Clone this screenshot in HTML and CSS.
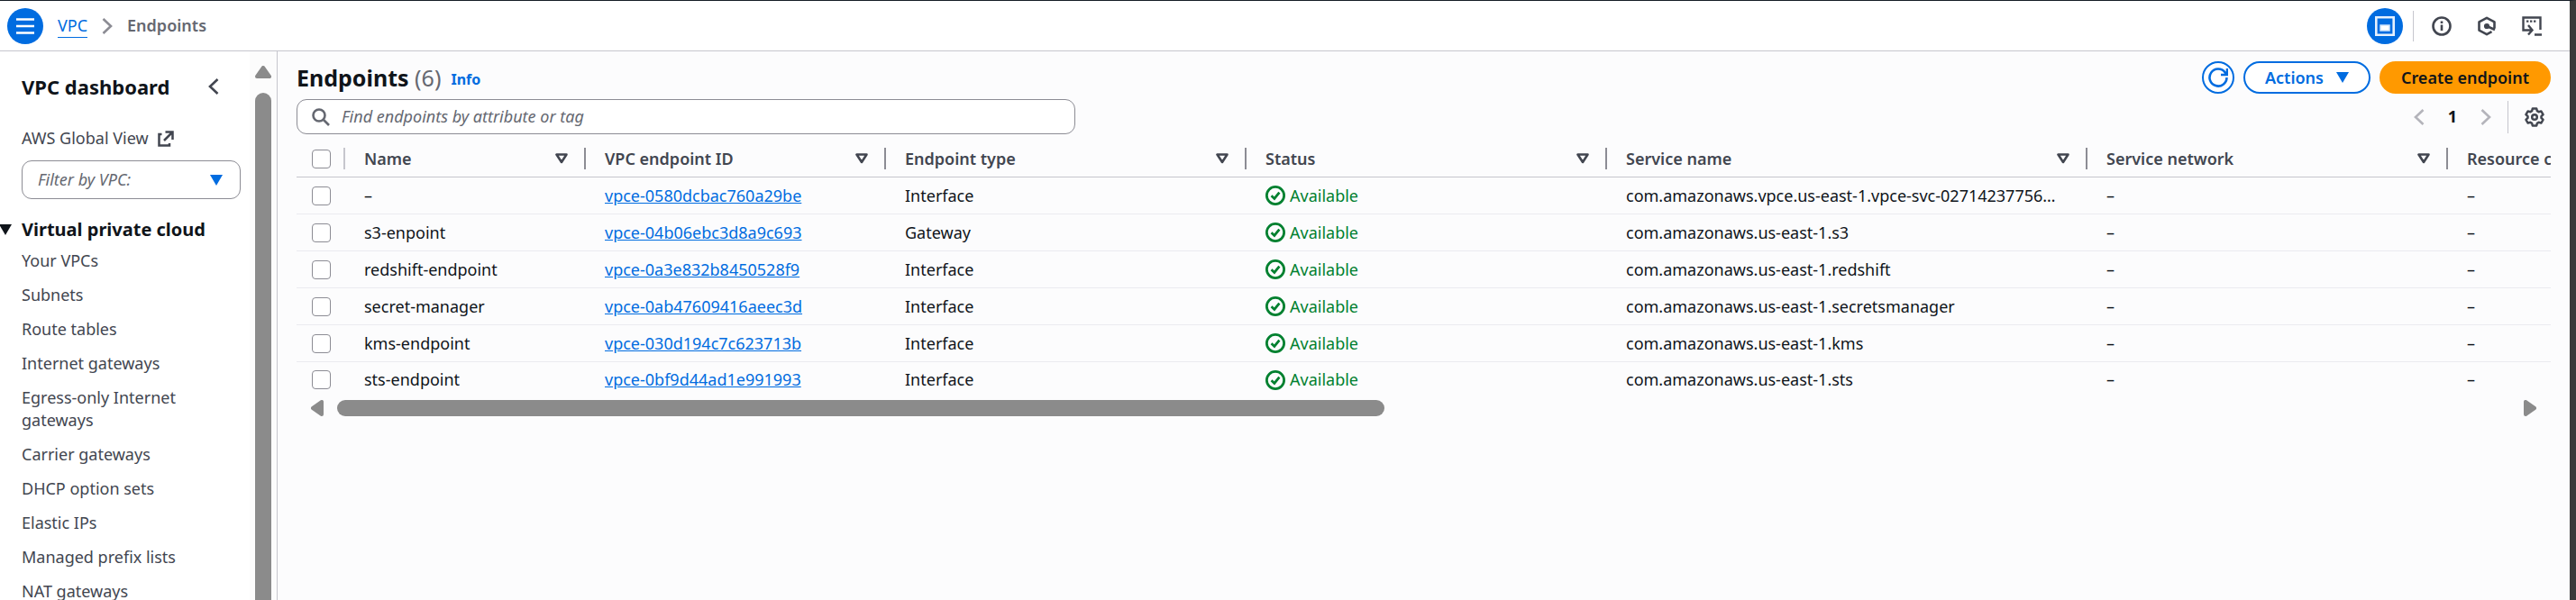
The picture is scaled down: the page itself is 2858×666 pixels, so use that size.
FILE: index.html
```html
<!DOCTYPE html>
<html lang="en">
<head>
<meta charset="utf-8">
<title>Endpoints | VPC</title>
<link rel="stylesheet" href="styles.css">
</head>
<body>
<svg class="defs" aria-hidden="true">
  <symbol id="caret" viewBox="0 0 14 12"><path d="M0 0h14L7 12z" fill="currentColor"/></symbol>
  <symbol id="filter" viewBox="0 0 14 12"><path d="M1.5 1.5h11L7 10z" fill="none" stroke="currentColor" stroke-width="2.6" stroke-linejoin="round"/></symbol>
  <symbol id="left" viewBox="0 0 12 18"><path d="M10.5 1 2 9l8.500 8" fill="none" stroke="currentColor" stroke-width="2.600"/></symbol>
  <symbol id="right" viewBox="0 0 12 18"><path d="M1.500 1 10 9l-8.500 8" fill="none" stroke="currentColor" stroke-width="2.600"/></symbol>
  <symbol id="ok" viewBox="0 0 16 16"><g fill="none" stroke="currentColor" stroke-width="2"><circle cx="8" cy="8" r="7"/><path d="m4.800 8.200 2.400 2.300 4-5"/></g></symbol>
</svg>
<header class="topbar">
  <button class="round menu" aria-label="Toggle navigation"><svg width="20" height="20" viewBox="0 0 20 20"><path d="M0 2.500h20M0 10h20M0 17.500h20" stroke="#fff" stroke-width="2.600"/></svg></button>
  <nav class="crumbs" aria-label="Breadcrumbs">
    <a href="#">VPC</a>
    <svg width="12" height="18"><use href="#right"/></svg>
    <span>Endpoints</span>
  </nav>
  <div class="tools">
    <button class="round" aria-label="Split panel"><svg width="22" height="22" viewBox="0 0 22 22"><path d="M1.300 1.300h19.400v19.400H1.300z" fill="none" stroke="#e6f1fd" stroke-width="2.600"/><path d="M6 10h10v6H6z" fill="#fff" stroke="#cfe4fb" stroke-width="1.500"/></svg></button>
    <span class="rule"></span>
    <button class="icon" aria-label="Info panel"><svg width="22" height="22" viewBox="0 0 22 22" fill="none" stroke="currentColor" stroke-width="2.600"><circle cx="11" cy="11" r="9.500"/><path d="M11 9.500V16M11 5.500V8"/></svg></button>
    <button class="icon" aria-label="Amazon Q"><svg width="22" height="22" viewBox="0 0 22 22" fill="none" stroke="currentColor" stroke-width="2.600" stroke-linejoin="round"><path d="M19.500 13.500V6.400L11 1.800 2.500 6.400v9.200l8.500 4.600 5.500-3M11 11l9 4"/><circle cx="11" cy="11" r="1.800" fill="currentColor"/></svg></button>
    <button class="icon" aria-label="CloudShell"><svg width="22" height="22" viewBox="0 0 22 22" fill="none" stroke="currentColor" stroke-width="2.400"><path d="M4 15.500H1.500v-14h19V15M3 15.500h8M7 10l4.500 5.500L7 20.500M14 20.500h8"/><path d="M5 5.600h2.400M9 5.600h2.400M13 5.600h2.400"/></svg></button>
  </div>
</header>
<div class="body">
  <aside class="side">
    <div class="side-main">
      <div class="side-head"><h2>VPC dashboard</h2><button class="icon" aria-label="Close navigation"><svg width="12" height="18"><use href="#left"/></svg></button></div>
      <a class="ext" href="#">AWS Global View <svg width="18" height="18" viewBox="0 0 18 18" fill="none" stroke="currentColor" stroke-width="2.500"><path d="M4.500 4H1.500v12.500H13V14M8.500 1.500h8V10M16 2 7 11"/></svg></a>
      <div class="select">
        <select aria-label="Filter by VPC"><option>Filter by VPC:</option></select>
        <svg width="14" height="12"><use href="#caret"/></svg>
      </div>
      <h3><svg width="14" height="12"><use href="#caret"/></svg>Virtual private cloud</h3>
      <ul>
        <li><a href="#">Your VPCs</a></li>
        <li><a href="#">Subnets</a></li>
        <li><a href="#">Route tables</a></li>
        <li><a href="#">Internet gateways</a></li>
        <li><a href="#">Egress-only Internet gateways</a></li>
        <li><a href="#">Carrier gateways</a></li>
        <li><a href="#">DHCP option sets</a></li>
        <li><a href="#">Elastic IPs</a></li>
        <li><a href="#">Managed prefix lists</a></li>
        <li><a href="#">NAT gateways</a></li>
      </ul>
    </div>
    <div class="vscroll"><svg width="18" height="14" viewBox="0 0 18 14"><path d="M9 2 16 12H2z" fill="#8b8b8b" stroke="#8b8b8b" stroke-width="4" stroke-linejoin="round"/></svg><div class="thumb"></div></div>
  </aside>
  <main>
    <div class="title">
      <h1>Endpoints <span>(6)</span></h1><a href="#">Info</a>
      <div class="actions">
        <button class="btn refresh" aria-label="Refresh"><svg width="22" height="22" viewBox="0 0 22 22" fill="none" stroke="currentColor" stroke-width="2.600"><path d="M20.500 11a9.500 9.500 0 1 1-2-5.800L20.500 8M21 1v7h-7"/></svg></button>
        <button class="btn">Actions <svg width="14" height="12"><use href="#caret"/></svg></button>
        <button class="btn primary">Create endpoint</button>
      </div>
    </div>
    <div class="filters">
      <label class="search"><svg width="20" height="20" viewBox="0 0 20 20" fill="none" stroke="currentColor" stroke-width="2.600"><circle cx="8" cy="8" r="6.500"/><path d="m13 13 6 6"/></svg><input type="text" aria-label="Find endpoints" placeholder="Find endpoints by attribute or tag"></label>
      <div class="pages">
        <button class="icon dim" aria-label="Previous page"><svg width="12" height="18"><use href="#left"/></svg></button>
        <button class="icon num">1</button>
        <button class="icon dim" aria-label="Next page"><svg width="12" height="18"><use href="#right"/></svg></button>
        <span class="rule"></span>
        <button class="icon gear" aria-label="Preferences"><svg width="22" height="22" viewBox="0 0 22 22" fill="none" stroke="currentColor" stroke-width="2.500" stroke-linejoin="round"><circle cx="11" cy="11" r="2.800"/><path d="M8.800 1.500h4.400l.7 2.700 1.700 1 2.700-.8 2.200 3.800-2 2v1.700l2 2-2.200 3.700-2.700-.8-1.700 1-.7 2.700H8.800l-.7-2.700-1.700-1-2.700.8-2.200-3.700 2-2v-1.700l-2-2 2.200-3.800 2.700.8 1.700-1z"/></svg></button>
      </div>
    </div>
    <div class="table-wrap">
      <table>
        <colgroup><col class="c-check"><col class="c-name"><col class="c-id"><col class="c-mid"><col class="c-mid"><col class="c-service"><col class="c-mid"><col class="c-mid"></colgroup>
        <thead>
          <tr>
            <th class="check"><input type="checkbox" aria-label="Select all"></th>
            <th><div>Name<svg width="14" height="12"><use href="#filter"/></svg></div></th>
            <th><div>VPC endpoint ID<svg width="14" height="12"><use href="#filter"/></svg></div></th>
            <th><div>Endpoint type<svg width="14" height="12"><use href="#filter"/></svg></div></th>
            <th><div>Status<svg width="14" height="12"><use href="#filter"/></svg></div></th>
            <th><div>Service name<svg width="14" height="12"><use href="#filter"/></svg></div></th>
            <th><div>Service network<svg width="14" height="12"><use href="#filter"/></svg></div></th>
            <th><div>Resource c</div></th>
          </tr>
        </thead>
        <tbody>
          <tr><td class="check"><input type="checkbox" aria-label="Select –"></td><td>–</td><td><a href="#">vpce-0580dcbac760a29be</a></td><td>Interface</td><td><span class="ok"><svg width="22" height="22"><use href="#ok"/></svg>Available</span></td><td>com.amazonaws.vpce.us-east-1.vpce-svc-02714237756…</td><td>–</td><td>–</td></tr>
          <tr><td class="check"><input type="checkbox" aria-label="Select s3-enpoint"></td><td>s3-enpoint</td><td><a href="#">vpce-04b06ebc3d8a9c693</a></td><td>Gateway</td><td><span class="ok"><svg width="22" height="22"><use href="#ok"/></svg>Available</span></td><td>com.amazonaws.us-east-1.s3</td><td>–</td><td>–</td></tr>
          <tr><td class="check"><input type="checkbox" aria-label="Select redshift-endpoint"></td><td>redshift-endpoint</td><td><a href="#">vpce-0a3e832b8450528f9</a></td><td>Interface</td><td><span class="ok"><svg width="22" height="22"><use href="#ok"/></svg>Available</span></td><td>com.amazonaws.us-east-1.redshift</td><td>–</td><td>–</td></tr>
          <tr><td class="check"><input type="checkbox" aria-label="Select secret-manager"></td><td>secret-manager</td><td><a href="#">vpce-0ab47609416aeec3d</a></td><td>Interface</td><td><span class="ok"><svg width="22" height="22"><use href="#ok"/></svg>Available</span></td><td>com.amazonaws.us-east-1.secretsmanager</td><td>–</td><td>–</td></tr>
          <tr><td class="check"><input type="checkbox" aria-label="Select kms-endpoint"></td><td>kms-endpoint</td><td><a href="#">vpce-030d194c7c623713b</a></td><td>Interface</td><td><span class="ok"><svg width="22" height="22"><use href="#ok"/></svg>Available</span></td><td>com.amazonaws.us-east-1.kms</td><td>–</td><td>–</td></tr>
          <tr><td class="check"><input type="checkbox" aria-label="Select sts-endpoint"></td><td>sts-endpoint</td><td><a href="#">vpce-0bf9d44ad1e991993</a></td><td>Interface</td><td><span class="ok"><svg width="22" height="22"><use href="#ok"/></svg>Available</span></td><td>com.amazonaws.us-east-1.sts</td><td>–</td><td>–</td></tr>
        </tbody>
      </table>
    </div>
    <div class="hscroll">
      <svg width="14" height="18" viewBox="0 0 14 18"><path d="M2 9 12 2v14z" fill="#8b8b8b" stroke="#8b8b8b" stroke-width="4" stroke-linejoin="round"/></svg>
      <div class="track"><div class="thumb"></div></div>
      <svg width="14" height="18" viewBox="0 0 14 18"><path d="M12 9 2 2v14z" fill="#8b8b8b" stroke="#8b8b8b" stroke-width="4" stroke-linejoin="round"/></svg>
    </div>
  </main>
</div>
</body>
</html>
```

FILE: styles.css
```css
* { box-sizing: border-box; }
html { height: 100%; }
body {
  margin: 0;
  height: 100%;
  display: flex;
  flex-direction: column;
  overflow: hidden;
  border-top: 1px solid #161d26;
  border-right: 7px solid #3b3b3b;
  background: #fcfcfd;
  color: #0f141a;
  font: 18px/25px "Noto Sans", "Open Sans", sans-serif;
}
svg { display: block; flex: none; }
.defs { position: absolute; width: 0; height: 0; }
h1, h2, h3, ul { margin: 0; padding: 0; }
a { color: #006ce0; }
button { font: inherit; margin: 0; padding: 0; border: 0; background: none; color: inherit; }
.icon { color: #424650; }
.rule { width: 1px; height: 34px; background: #c6c6cd; }

.topbar {
  flex: none;
  height: 56px;
  display: flex;
  align-items: center;
  padding: 0 31px 0 8px;
  background: #fff;
  border-bottom: 1px solid #c6c6cd;
}
.round {
  width: 40px;
  height: 40px;
  border-radius: 50%;
  background: #006ce0;
  display: grid;
  place-items: center;
}
.crumbs { display: flex; align-items: center; gap: 16px; margin-left: 16px; }
.crumbs a { text-decoration: none; border-bottom: 1px solid; }
.crumbs svg { color: #8c8c94; }
.crumbs span { font-weight: 600; color: #656871; }
.tools { margin-left: auto; display: flex; align-items: center; gap: 28px; }
.tools .rule { margin: 0 -8px 0 -17px; }

.body { flex: 1; min-height: 0; display: flex; }
.side { flex: none; width: 308px; display: flex; background: #fff; border-right: 1px solid #c6c6cd; color: #424650; }
.side-main { flex: 1; padding: 23px 10px 0 24px; }
.side-head { display: flex; align-items: center; justify-content: space-between; padding-right: 24px; height: 32px; }
.side h2 { font-size: 22px; font-weight: 700; color: #0f141a; }
.side a { color: inherit; text-decoration: none; }
.ext { display: flex; align-items: center; gap: 10px; margin-top: 29px; }
.select { position: relative; margin-top: 12px; }
.select select {
  appearance: none;
  width: 100%;
  height: 43px;
  padding: 0 17px;
  border: 1px solid #8c8c94;
  border-radius: 11px;
  background: #fff;
  color: #656871;
  font: italic 18px/25px "Noto Sans", "Open Sans", sans-serif;
}
.select svg { position: absolute; right: 20px; top: 16px; color: #006ce0; }
.side h3 { display: flex; align-items: center; gap: 11px; margin: 21px 0 0 -25px; font-size: 20px; font-weight: 700; color: #0f141a; white-space: nowrap; }
.side ul { list-style: none; display: flex; flex-direction: column; gap: 13px; margin-top: 10px; }
.side li { width: 190px; }
.vscroll { width: 30px; flex: none; display: flex; flex-direction: column; align-items: center; gap: 16px; padding-top: 16px; background: #fcfcfc; }
.thumb { background: #8b8b8b; border-radius: 9px; }
.vscroll .thumb { width: 18px; flex: 1; border-radius: 9px 9px 0 0; }

main { flex: 1; min-width: 0; padding: 11px 21px 0 21px; }
.title { display: flex; align-items: center; }
h1 { font-size: 25px; font-weight: 700; }
h1 span { font-weight: 400; color: #656871; }
.title > a { font-size: 16px; font-weight: 700; text-decoration: none; margin: 5px 0 0 11px; }
.actions { margin-left: auto; display: flex; gap: 10px; }
.btn {
  height: 36px;
  padding: 0 22px;
  display: flex;
  align-items: center;
  gap: 14px;
  border: 2px solid #006ce0;
  border-radius: 18px;
  background: #fff;
  color: #006ce0;
  font-weight: 600;
}
.refresh { width: 36px; padding: 0; justify-content: center; }
.primary { border-color: #f90; background: #f90; color: #0f141a; }
.filters { display: flex; align-items: center; justify-content: space-between; margin-top: 6px; }
.search {
  width: 864px;
  height: 39px;
  display: flex;
  align-items: center;
  gap: 13px;
  padding: 0 16px;
  border: 1px solid #8c8c94;
  border-radius: 11px;
  background: #fff;
  color: #656871;
}
.search input { flex: 1; padding: 0; border: 0; outline: 0; background: none; font: italic 18px/25px "Noto Sans", "Open Sans", sans-serif; }
.search input::placeholder { color: #656871; opacity: 1; }
.pages { display: flex; align-items: center; padding-right: 7px; }
.pages .rule { height: 36px; margin: 0 18px; }
.dim { color: #b4b4bb; }
.pages .num { padding: 0 26px; font-weight: 700; color: #0f141a; }

.table-wrap { overflow: hidden; margin-top: 7px; }
table { width: 2787px; table-layout: fixed; border-collapse: separate; border-spacing: 0; }
.c-check { width: 54px; }
.c-name { width: 267px; }
.c-id { width: 333px; }
.c-mid { width: 400px; }
.c-service { width: 533px; }
th, td { padding: 0 0 0 21px; text-align: left; white-space: nowrap; height: 41px; border-bottom: 1px solid #ebebf0; }
tbody tr:last-child td { height: 39px; border-bottom: 0; }
th { font-weight: 600; color: #424650; border-color: #c6c6cd; }
th div { display: flex; align-items: center; justify-content: space-between; height: 24px; padding-right: 18px; border-right: 2px solid #8c8c94; }
th:last-child div { border: 0; }
.check { padding-left: 17px; }
th.check { background: linear-gradient(#c6c6cd, #c6c6cd) right center / 2px 24px no-repeat; }
.check input { appearance: none; display: block; width: 21px; height: 21px; margin: 0; border: 1px solid #8c8c94; border-radius: 4px; background: #fff; }
.ok { display: flex; align-items: center; gap: 5px; color: #00802f; }
.hscroll { display: flex; align-items: center; gap: 15px; padding: 3px 16px 0 16px; }
.track { flex: 1; }
.track .thumb { width: 48.2%; height: 18px; }
```
